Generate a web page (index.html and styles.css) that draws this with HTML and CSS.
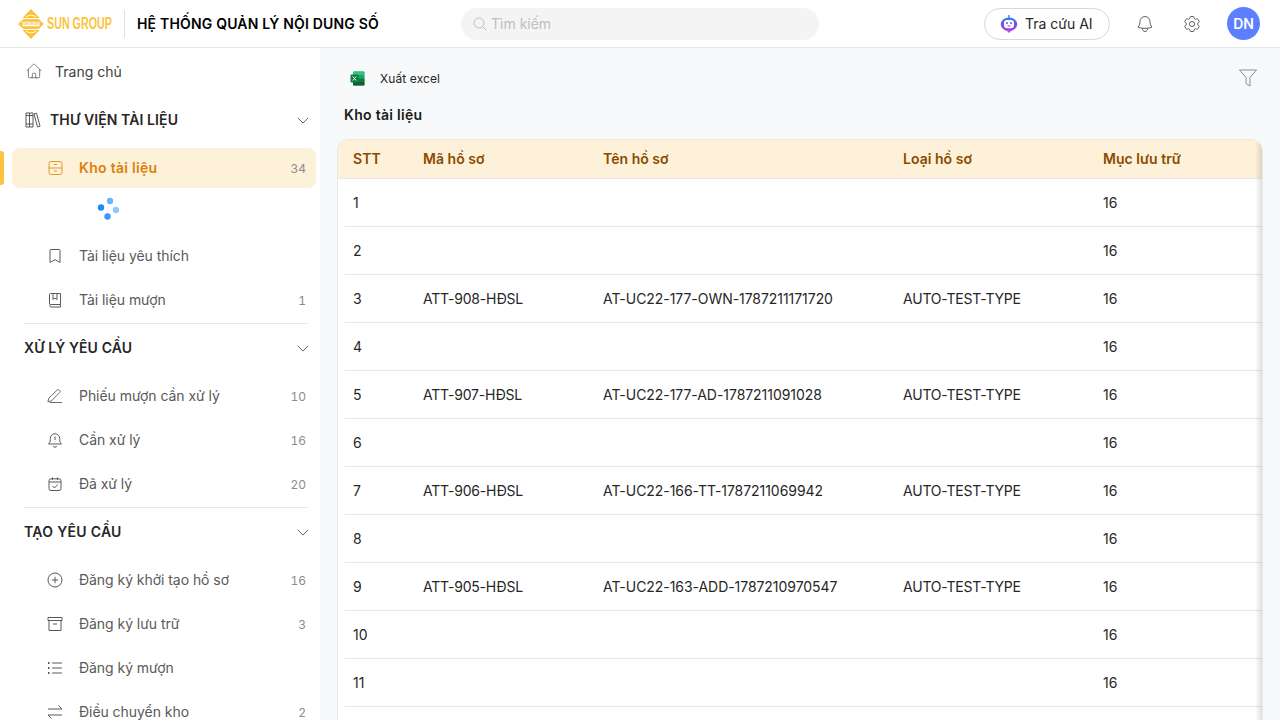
FILE: index.html
```html
<!DOCTYPE html>
<html lang="vi">
<head>
    <meta charset="UTF-8">
    <meta name="viewport" content="width=device-width, initial-scale=1.0">
    <title>Kho tài liệu</title>
    <link rel="stylesheet" href="styles.css">
</head>
<body>
    <header class="topbar">
        <div class="brand">
            <svg class="brand-mark" viewBox="0 0 26 30" width="26" height="30">
                <path d="M13 0 L21.500 9 H4.500 Z" fill="#fbc02d"/>
                <path d="M4.500 21 H21.500 L13 30 Z" fill="#fbc02d"/>
                <path d="M0 15 L5.500 10 H20.500 L26 15 L20.500 20 H5.500 Z" fill="#fcc341"/>
                <path d="M8 7.500 Q13 4.500 18 7.500" fill="none" stroke="#fff" stroke-width="1"/>
                <path d="M8 22.500 Q13 25.500 18 22.500" fill="none" stroke="#fff" stroke-width="1"/>
                <rect x="4.500" y="12.800" width="17" height="4.400" fill="#fff"/>
                <text x="13" y="16.300" text-anchor="middle" class="brand-tiny">SUN GROUP</text>
            </svg>
            <span class="brand-name">SUN GROUP</span>
        </div>
        <div class="brand-line"></div>
        <div class="app-title">HỆ THỐNG QUẢN LÝ NỘI DUNG SỐ</div>
        <div class="search">
            <svg viewBox="0 0 24 24" width="16" height="16" class="line-icon"><circle cx="10.500" cy="10.500" r="7.500"/><path d="M16 16l5.500 5.500"/></svg>
            <span>Tìm kiếm</span>
        </div>
        <div class="top-actions">
            <button class="ai-btn">
                <svg viewBox="0 0 18 18" width="18" height="18">
                    <defs><linearGradient id="botg" x1="0" y1="0" x2="0" y2="1"><stop offset="0" stop-color="#2f7df6"/><stop offset="1" stop-color="#b02ee0"/></linearGradient></defs>
                    <rect x="8.200" y="0" width="1.600" height="3.500" fill="#3b9cf6"/>
                    <ellipse cx="9" cy="9.200" rx="8.200" ry="6.800" fill="url(#botg)"/>
                    <path d="M6 15 H12 L9 18 Z" fill="#c04ae6"/>
                    <rect x="4" y="5" width="10" height="8.200" rx="3.200" fill="#fff"/>
                    <rect x="6.300" y="7" width="1.400" height="2.200" rx=".7" fill="#4338ca"/>
                    <rect x="10.300" y="7" width="1.400" height="2.200" rx=".7" fill="#4338ca"/>
                    <path d="M7.500 11h3" stroke="#4338ca" stroke-width=".8"/>
                </svg>
                Tra cứu AI
            </button>
            <svg class="line-icon top-bell" viewBox="0 0 24 24" width="20" height="20"><path d="M14.857 17.082a23.848 23.848 0 005.454-1.31A8.967 8.967 0 0118 9.750v-.7V9A6 6 0 006 9v.750a8.967 8.967 0 01-2.312 6.022c1.733.64 3.560 1.085 5.455 1.310m5.714 0a24.255 24.255 0 01-5.714 0m5.714 0a3 3 0 11-5.714 0"/></svg>
            <svg class="line-icon top-gear" viewBox="0 0 24 24" width="20" height="20"><path d="M9.594 3.940c.09-.542.56-.94 1.110-.94h2.593c.55 0 1.020.398 1.110.94l.213 1.281c.063.374.313.686.645.87.074.04.147.083.22.127.324.196.72.257 1.075.124l1.217-.456a1.125 1.125 0 011.370.49l1.296 2.247a1.125 1.125 0 01-.26 1.431l-1.003.827c-.293.24-.438.613-.431.992a6.759 6.759 0 010 .255c-.007.378.138.75.43.99l1.005.828c.424.35.534.954.26 1.430l-1.298 2.247a1.125 1.125 0 01-1.369.491l-1.217-.456c-.355-.133-.75-.072-1.076.124a6.570 6.570 0 01-.22.128c-.331.183-.581.495-.644.869l-.213 1.280c-.09.543-.56.941-1.110.941h-2.594c-.55 0-1.020-.398-1.110-.94l-.213-1.281c-.062-.374-.312-.686-.644-.87a6.520 6.520 0 01-.22-.127c-.325-.196-.72-.257-1.076-.124l-1.217.456a1.125 1.125 0 01-1.369-.49l-1.297-2.247a1.125 1.125 0 01.26-1.431l1.004-.827c.292-.24.437-.613.43-.992a6.932 6.932 0 010-.255c.007-.378-.138-.75-.43-.99l-1.004-.828a1.125 1.125 0 01-.26-1.430l1.297-2.247a1.125 1.125 0 011.370-.491l1.216.456c.356.133.751.072 1.076-.124.072-.044.146-.087.22-.128.332-.183.582-.495.644-.869l.214-1.281z"/><path d="M15 12a3 3 0 11-6 0 3 3 0 016 0z"/></svg>
            <div class="avatar">DN</div>
        </div>
    </header>

    <div class="layout">
        <aside class="sidebar">
            <a class="home-link">
                <svg class="line-icon" viewBox="0 0 24 24" width="18" height="18"><path d="M2.250 12l8.954-8.955c.44-.439 1.152-.439 1.591 0L21.750 12M4.500 9.750v10.125c0 .621.504 1.125 1.125 1.125H9.750v-4.875c0-.621.504-1.125 1.125-1.125h2.250c.621 0 1.125.504 1.125 1.125V21h4.125c.621 0 1.125-.504 1.125-1.125V9.750M8.250 21h8.250"/></svg>
                Trang chủ
            </a>

            <div class="section-head with-icon">
                <svg class="line-icon" viewBox="0 0 18 18" width="18" height="18"><path d="M2 2h3.500v14H2zM5.500 2H9v14H5.500zM2 4.500h7M2 13h7M10 3l2.500-.8 3.500 13-2.500.8z"/></svg>
                <span>THƯ VIỆN TÀI LIỆU</span>
                <svg class="chevron" viewBox="0 0 14 8" width="12" height="7"><path d="M1 1l6 6 6-6"/></svg>
            </div>
            <ul class="menu">
                <li class="menu-item active">
                    <svg class="line-icon" viewBox="0 0 16 16" width="16" height="16"><rect x="2" y="1.500" width="13" height="13" rx="2"/><path d="M2 8h13M7 4.500h3M7 11h3"/></svg>
                    <span class="label">Kho tài liệu</span><span class="count">34</span>
                </li>
                <li class="spin-row">
                    <svg viewBox="0 0 24 24" width="24" height="24">
                        <circle cx="15" cy="5" r="3.200" fill="#69b5ff"/>
                        <circle cx="21" cy="14" r="3.200" fill="#91c8ff"/>
                        <circle cx="12.500" cy="20.500" r="3.200" fill="#4096ff"/>
                        <circle cx="6" cy="11.500" r="3.200" fill="#1e88ff"/>
                    </svg>
                </li>
                <li class="menu-item">
                    <svg class="line-icon" viewBox="0 0 16 16" width="16" height="16"><path d="M3 2.500c0-.6.400-1 1-1h8c.6 0 1 .4 1 1v12l-5-2.800L3 14.500z"/></svg>
                    <span class="label">Tài liệu yêu thích</span>
                </li>
                <li class="menu-item">
                    <svg class="line-icon" viewBox="0 0 16 16" width="16" height="16"><path d="M2.500 12.500v-10c0-.6.400-1 1-1h10v11H3.800a1.300 1.300 0 000 2.500h9.700v-2.500M6 1.500v6l2-1.500 2 1.500v-6"/></svg>
                    <span class="label">Tài liệu mượn</span><span class="count">1</span>
                </li>
            </ul>
            <div class="divider"></div>

            <div class="section-head">
                <span>XỬ LÝ YÊU CẦU</span>
                <svg class="chevron" viewBox="0 0 14 8" width="12" height="7"><path d="M1 1l6 6 6-6"/></svg>
            </div>
            <ul class="menu">
                <li class="menu-item">
                    <svg class="line-icon" viewBox="0 0 18 16" width="16" height="16"><path d="M1 14.500l1-4L11.500 1.200a1.400 1.400 0 012 0l.8.800a1.400 1.400 0 010 2L5 13.500zM3 15.300h14"/></svg>
                    <span class="label">Phiếu mượn cần xử lý</span><span class="count">10</span>
                </li>
                <li class="menu-item">
                    <svg class="line-icon" viewBox="0 0 16 16" width="16" height="16"><path d="M1.500 12c1-.9 1.800-2 1.800-4.500V6.500a4.700 4.700 0 019.400 0v1c0 2.500.8 3.600 1.800 4.500zM6.300 14a1.800 1.800 0 003.400 0M8 4.500V8M8 9.700v.3"/></svg>
                    <span class="label">Cần xử lý</span><span class="count">16</span>
                </li>
                <li class="menu-item">
                    <svg class="line-icon" viewBox="0 0 16 16" width="16" height="16"><rect x="2" y="2.800" width="12" height="11.700" rx="2"/><path d="M2 6h12M5.500 1.500v2.500M10.500 1.500v2.500M5.500 10l2 2 3.200-3.500"/></svg>
                    <span class="label">Đã xử lý</span><span class="count">20</span>
                </li>
            </ul>
            <div class="divider"></div>

            <div class="section-head spaced">
                <span>TẠO YÊU CẦU</span>
                <svg class="chevron" viewBox="0 0 14 8" width="12" height="7"><path d="M1 1l6 6 6-6"/></svg>
            </div>
            <ul class="menu">
                <li class="menu-item">
                    <svg class="line-icon" viewBox="0 0 16 16" width="16" height="16"><circle cx="8" cy="8" r="7"/><path d="M8 4.800v6.400M4.800 8h6.400"/></svg>
                    <span class="label">Đăng ký khởi tạo hồ sơ</span><span class="count">16</span>
                </li>
                <li class="menu-item">
                    <svg class="line-icon" viewBox="0 0 16 16" width="16" height="16"><path d="M1 1.500h14v3H1zM2 4.500v10h12v-10M6 8h4"/></svg>
                    <span class="label">Đăng ký lưu trữ</span><span class="count">3</span>
                </li>
                <li class="menu-item">
                    <svg class="line-icon" viewBox="0 0 16 16" width="16" height="16"><path d="M5 3h10M5 8h10M5 13h10"/><path d="M1 3h1.500M1 8h1.500M1 13h1.500" stroke-width="2"/></svg>
                    <span class="label">Đăng ký mượn</span>
                </li>
                <li class="menu-item">
                    <svg class="line-icon" viewBox="0 0 16 16" width="16" height="16"><path d="M1 5h14l-3.500-3.500M15 11H1l3.500 3.500"/></svg>
                    <span class="label">Điều chuyển kho</span><span class="count">2</span>
                </li>
            </ul>
        </aside>

        <main class="content">
            <div class="toolbar">
                <a class="export">
                    <svg viewBox="0 0 15 15" width="15" height="15">
                        <rect x="3" y="0.500" width="11.500" height="14" rx="1" fill="#21a366"/>
                        <rect x="3" y="0.500" width="11.500" height="3.500" rx="1" fill="#33c481"/>
                        <rect x="8.750" y="7.500" width="5.750" height="3.500" fill="#107c41"/>
                        <rect x="3" y="11" width="11.500" height="3.500" rx="1" fill="#185c37"/>
                        <rect x="0.500" y="3.500" width="8" height="8" rx="1" fill="#107c41"/>
                        <path d="M2.800 5.500l3.400 4M6.200 5.500l-3.400 4" stroke="#fff" stroke-width="1"/>
                    </svg>
                    <span>Xuất excel</span>
                </a>
                <svg class="line-icon filter" viewBox="0 0 20 18" width="20" height="18"><path d="M1.500 1h17l-6.500 7.500v8.500l-4-2.500v-6z"/></svg>
            </div>
            <h2 class="page-title">Kho tài liệu</h2>

            <div class="table-card">
                <div class="row head">
                    <div>STT</div><div>Mã hồ sơ</div><div>Tên hồ sơ</div><div>Loại hồ sơ</div><div>Mục lưu trữ</div>
                </div>
                <div class="row"><div>1</div><div></div><div></div><div></div><div>16</div></div>
                <div class="row"><div>2</div><div></div><div></div><div></div><div>16</div></div>
                <div class="row"><div>3</div><div class="code">ATT-908-HĐSL</div><div class="name">AT-UC22-177-OWN-1787211171720</div><div class="type">AUTO-TEST-TYPE</div><div>16</div></div>
                <div class="row"><div>4</div><div></div><div></div><div></div><div>16</div></div>
                <div class="row"><div>5</div><div class="code">ATT-907-HĐSL</div><div class="name">AT-UC22-177-AD-1787211091028</div><div class="type">AUTO-TEST-TYPE</div><div>16</div></div>
                <div class="row"><div>6</div><div></div><div></div><div></div><div>16</div></div>
                <div class="row"><div>7</div><div class="code">ATT-906-HĐSL</div><div class="name">AT-UC22-166-TT-1787211069942</div><div class="type">AUTO-TEST-TYPE</div><div>16</div></div>
                <div class="row"><div>8</div><div></div><div></div><div></div><div>16</div></div>
                <div class="row"><div>9</div><div class="code">ATT-905-HĐSL</div><div class="name">AT-UC22-163-ADD-1787210970547</div><div class="type">AUTO-TEST-TYPE</div><div>16</div></div>
                <div class="row"><div>10</div><div></div><div></div><div></div><div>16</div></div>
                <div class="row"><div>11</div><div></div><div></div><div></div><div>16</div></div>
                <div class="edge-shadow"></div>
            </div>
        </main>
    </div>
</body>
</html>
```

FILE: styles.css
```css
* {
    box-sizing: border-box;
}

html, body {
    height: 100%;
}

body {
    margin: 0;
    overflow: hidden;
    font-family: Inter, "Noto Sans", sans-serif;
    font-size: 14px;
    color: #262626;
    background-color: #f8f9fb;
}

.line-icon {
    fill: none;
    stroke: #595959;
    stroke-width: 1;
    flex-shrink: 0;
}

/* top bar */
.topbar {
    height: 48px;
    display: flex;
    align-items: center;
    padding-left: 18px;
    background-color: #fff;
    border-bottom: 1px solid #e5e7eb;
}

.brand {
    width: 94px;
    display: flex;
    align-items: center;
    gap: 3px;
    flex-shrink: 0;
}

.brand-mark {
    flex-shrink: 0;
}

.brand-tiny {
    font-family: "Liberation Sans", sans-serif;
    font-size: 2.600px;
    font-weight: 700;
    fill: #fbc02d;
}

.brand-name {
    font-family: "Liberation Sans", sans-serif;
    font-size: 16px;
    font-weight: 700;
    color: #fcc341;
    white-space: nowrap;
    transform: scaleX(0.67);
    transform-origin: left center;
}

.brand-line {
    width: 1px;
    height: 28px;
    margin: 0 12px;
    background-color: #e0e0e0;
}

.app-title {
    width: 324px;
    font-weight: 600;
    letter-spacing: 0.18px;
    color: #000;
    white-space: nowrap;
}

.search {
    width: 358px;
    height: 32px;
    display: flex;
    align-items: center;
    gap: 3px;
    padding-left: 11px;
    border-radius: 16px;
    background-color: #f4f4f5;
    color: #bfbfbf;
}

.search .line-icon {
    stroke: #a3a3a3;
}

.top-actions {
    margin-left: auto;
    display: flex;
    align-items: center;
    padding-right: 20px;
}

.ai-btn {
    width: 126px;
    height: 32px;
    display: flex;
    align-items: center;
    gap: 7px;
    padding: 0 0 0 15px;
    border: 1px solid #d9d9d9;
    border-radius: 16px;
    background-color: #fff;
    font-family: inherit;
    font-size: 14px;
    color: #262626;
}

.top-actions > .line-icon {
    stroke: #404040;
}

.top-bell {
    margin-left: 25px;
}

.top-gear {
    margin-left: 27px;
}

.avatar {
    width: 33px;
    height: 33px;
    margin-left: 25px;
    border-radius: 50%;
    display: flex;
    align-items: center;
    justify-content: center;
    background-color: #5b7fff;
    color: #fff;
    font-weight: 600;
}

/* sidebar */
.layout {
    height: 672px;
    display: flex;
}

.sidebar {
    width: 320px;
    height: 100%;
    flex-shrink: 0;
    padding-top: 2px;
    overflow: hidden;
    background-color: #fff;
}

.home-link {
    height: 44px;
    margin-bottom: 2px;
    padding: 0 0 2px 25px;
    display: flex;
    align-items: center;
    gap: 12px;
    color: #404040;
}

.section-head {
    height: 48px;
    display: flex;
    align-items: center;
    padding: 0 11px 0 24px;
    font-weight: 600;
    color: #262626;
}

.section-head.with-icon {
    gap: 8px;
}

.section-head span {
    letter-spacing: 0.1px;
    margin-top: -1px;
}

.section-head.spaced span {
    letter-spacing: 0.3px;
}

.chevron {
    margin-left: auto;
    fill: none;
    stroke: #595959;
    stroke-width: 1.100;
}

.menu {
    list-style: none;
    margin: 0;
    padding: 2px 0 0;
}

.menu-item {
    position: relative;
    height: 44px;
    display: flex;
    align-items: center;
    gap: 16px;
    margin: 0 4px 0 12px;
    padding: 0 10px 0 35px;
    color: #595959;
}

.label {
    margin-top: -2px;
    white-space: nowrap;
    letter-spacing: -0.05px;
}

.count {
    margin-left: auto;
    font-size: 12px;
    font-variant-numeric: tabular-nums;
    color: #8c8c8c;
}

.menu-item.active {
    height: 40px;
    margin-top: 2px;
    margin-bottom: 2px;
    border-radius: 8px;
    background-color: #fdf1d9;
    color: #d98309;
    font-weight: 600;
}

.menu-item.active .label {
    letter-spacing: 0.3px;
}

.menu-item.active .line-icon {
    stroke: #e09a2b;
}

.menu-item.active .count {
    font-weight: 400;
}

.menu-item.active::before {
    content: "";
    position: absolute;
    left: -12px;
    top: 3px;
    width: 4px;
    height: 34px;
    border-radius: 0 3px 3px 0;
    background-color: #fcc341;
}

.spin-row {
    height: 44px;
    padding: 6px 0 0 95px;
}

.spin-row svg {
    display: block;
}

.divider {
    height: 1px;
    margin: 1px 12px 0 24px;
    background-color: #e5e7eb;
}

/* main content */
.content {
    flex: 1;
    min-width: 0;
    padding: 0 17px;
    display: flex;
    flex-direction: column;
}

.toolbar {
    height: 60px;
    flex-shrink: 0;
    display: flex;
    align-items: center;
    padding: 0 5px 0 13px;
}

.export {
    display: flex;
    align-items: center;
    gap: 15px;
    font-size: 12px;
    letter-spacing: 0.1px;
    color: #262626;
}

.filter {
    margin-left: auto;
    stroke: #8c8c8c;
}

.page-title {
    height: 17px;
    flex-shrink: 0;
    margin: 0 0 14px 7px;
    line-height: 13px;
    font-size: 14px;
    font-weight: 600;
    letter-spacing: 0.3px;
    color: #1a1a1a;
}

.table-card {
    position: relative;
    flex: 1;
    min-height: 0;
    border: 1px solid #e5e7eb;
    border-bottom: none;
    border-radius: 12px 12px 0 0;
    background-color: #fff;
    overflow: hidden;
}

.row {
    height: 48px;
    display: grid;
    grid-template-columns: 70px 180px 300px 200px 1fr;
    align-items: center;
    margin-left: 7px;
    padding-left: 8px;
    border-bottom: 1px solid #e5e7eb;
}

.row > div {
    min-width: 0;
}

.row.head {
    height: 39px;
    margin-left: 0;
    padding: 0 0 2px 15px;
    background-color: #fdf1d9;
    color: #8a4b00;
    font-weight: 600;
    letter-spacing: 0.03px;
}

.code {
    letter-spacing: -0.2px;
}

.name {
    letter-spacing: -0.05px;
}

.type {
    letter-spacing: -0.2px;
    white-space: nowrap;
}

.edge-shadow {
    position: absolute;
    top: 0;
    right: 0;
    bottom: 0;
    width: 7px;
    background: linear-gradient(to right, rgba(0, 0, 0, 0), rgba(0, 0, 0, 0.12));
}
```
